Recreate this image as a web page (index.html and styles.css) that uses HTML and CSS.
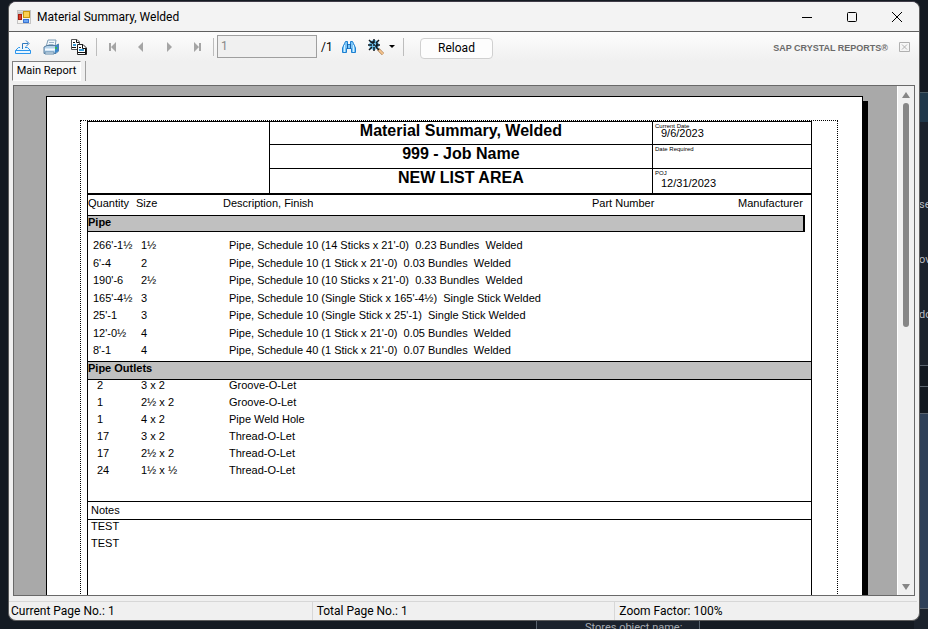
FILE: index.html
```html
<!DOCTYPE html>
<html lang="en">
<head>
<meta charset="utf-8">
<title>Material Summary, Welded</title>
<link rel="stylesheet" href="styles.css">
</head>
<body>
<div class="desktop" aria-hidden="true">
  <div class="side">
    <div class="side-head"></div>
    <div class="side-text"><span>se</span><span>ov</span><span>do</span></div>
    <div class="side-rows"></div>
    <div class="side-panel"></div>
  </div>
  <div class="under">Stores object name:</div>
</div>
<main class="window">
  <header class="titlebar">
    <svg class="app-icon" viewBox="0 0 14 14"><rect width="14" height="14" fill="#c4c4c4"/><rect x="1" y="1" width="12" height="12" fill="#f4f2ee"/><path d="M1 3H6" stroke="#c4c4c4" stroke-width="3"/><rect x="1.500" y="4.500" width="3" height="5" fill="#d8402c" stroke="#a81c10"/><rect x="6.500" y="1.500" width="6" height="6" fill="#fbd052" stroke="#c8960c"/><rect x="6.500" y="9.500" width="5" height="3" fill="#6ca8f6" stroke="#3a74d0"/></svg>
    <h1>Material Summary, Welded</h1>
    <div class="caption-buttons">
      <button aria-label="Minimize"><svg viewBox="0 0 12 12"><path d="M1 6.500H11"/></svg></button>
      <button aria-label="Maximize"><svg viewBox="0 0 12 12"><rect x="1.500" y="1.500" width="9" height="9" rx="1"/></svg></button>
      <button aria-label="Close"><svg viewBox="0 0 12 12"><path d="M1 1L11 11M11 1L1 11"/></svg></button>
    </div>
  </header>
  <div class="toolbar">
    <button class="tool" aria-label="Export"><svg viewBox="0 0 16 16" fill="none"><path d="M5 8.500H3.500L.5 11.500V14.500H15.500V11.500L12.500 8.500H10" fill="#e8f6ff" stroke="#2c95ec"/><path d="M.5 11.500H15.500" stroke="#2c95ec"/><path d="M7.500 10V4.500H13M11 1.500L14 4.500L11 7.500" stroke="#2a78c0"/></svg></button>
    <button class="tool" aria-label="Print"><svg viewBox="0 0 16 16"><path d="M5 1H13L12 8H3Z" fill="#f2f8fd" stroke="#7d9cb5"/><path d="M6 3.500H11M5.500 5.500H10.500" stroke="#9ab4c8"/><path d="M1 8L4 6.500H13L15.500 5V12L13 14.500H1Z" fill="#b4d2ea" stroke="#5a7f9f"/><path d="M2 10.500H12" stroke="#f5fbff" stroke-width="2"/><path d="M12 7L15.500 5V12L12 14.500Z" fill="#3b86c9"/><rect x="12" y="8" width="2" height="2" fill="#35b557"/><path d="M2 13H11V15H2Z" fill="#eef6fc" stroke="#6089aa"/></svg></button>
    <button class="tool" aria-label="Copy"><svg viewBox="0 0 16 16"><path d="M.5.500H6L8.500 3V10.500H.5Z" fill="#fff" stroke="#555"/><path d="M2 5H5V7H2Z" fill="#3a9ad4"/><path d="M5.500 1V3.500H8M2 3.500H4M1 8.500H5" stroke="#111" fill="none"/><path d="M6.500 5.500H12L15.500 9V15.500H6.500Z" fill="#fff" stroke="#222"/><path d="M8 10H13V12H8Z" fill="#3a9ad4"/><path d="M11.500 6V9.500H15M8 8.500H10M7 13.500H14M14.500 10V15" stroke="#111" fill="none"/></svg></button>
    <span class="sep"></span>
    <button class="nav" aria-label="First page" disabled><svg viewBox="0 0 8 10"><path d="M0 1H2V9H0ZM7 0V10L2 5Z"/></svg></button>
    <button class="nav" aria-label="Previous page" disabled><svg viewBox="0 0 8 10"><path d="M6 0V10L1 5Z"/></svg></button>
    <button class="nav" aria-label="Next page" disabled><svg viewBox="0 0 8 10"><path d="M2 0V10L7 5Z"/></svg></button>
    <button class="nav" aria-label="Last page" disabled><svg viewBox="0 0 8 10"><path d="M6 1H8V9H6ZM1 0V10L6 5Z"/></svg></button>
    <span class="sep"></span>
    <input class="page-no" type="text" value="1" aria-label="Page number" disabled>
    <span class="page-total">/1</span>
    <button class="tool find" aria-label="Find text"><svg viewBox="0 0 16 16"><path d="M3.500 4.500L4.500 2.500H6.500V5.500H9.500V2.500H11.500L12.500 4.500L14.500 9V13.500H10.500V9.500H5.500V13.500H1.500V9Z" fill="#7cc6f8" stroke="#1f80d0"/><path d="M3.500 6V13M12.500 6V13" stroke="#d2f1ff"/><path d="M6.500 5V10M9.500 5V10" stroke="#1b62a8"/></svg></button>
    <button class="tool zoom" aria-label="Zoom"><svg viewBox="0 0 16 16"><path d="M10 10L15 15" stroke="#9c6a3a" stroke-width="3"/><path d="M10 10L15 15" stroke="#f5c48e" stroke-width="2"/><circle cx="6" cy="6" r="5" fill="#6cc0ea"/><path d="M6 0V4M6 8V12M0 6H4M8 6H12M1 1L4 4M8 8L11 11M11 1L8 4M4 8L1 11M3 3H5V5M9 4V7H7" fill="none" stroke="#101820" stroke-width="1.500"/><path d="M5 6H7M6 5V7" stroke="#101820"/></svg><i class="caret"></i></button>
    <span class="sep"></span>
    <button class="reload">Reload</button>
    <strong class="brand">SAP CRYSTAL REPORTS<span>®</span></strong>
    <button class="panel-close" aria-label="Close view" disabled><svg viewBox="0 0 11 10"><path d="M.5.500H10.500V9.500H.5ZM3 2.500L8 7.500M8 2.500L3 7.500"/></svg></button>
  </div>
  <nav class="tabs"><button class="tab">Main Report</button></nav>
  <section class="viewer">
    <div class="canvas">
      <article class="page">
        <div class="margins">
          <div class="report">
            <div class="head">
              <div class="logo"></div>
              <div class="titles"><h2>Material Summary, Welded</h2><h2>999 - Job Name</h2><h2>NEW LIST AREA</h2></div>
              <dl class="dates">
                <div><dt>Current Date</dt><dd>9/6/2023</dd></div>
                <div><dt>Date Required</dt><dd></dd></div>
                <div class="last"><dt>POJ</dt><dd>12/31/2023</dd></div>
              </dl>
            </div>
            <table>
              <colgroup><col class="c-qty"><col class="c-size"><col><col class="c-part"><col class="c-man"></colgroup>
              <thead><tr><th>Quantity</th><th>Size</th><th>Description, Finish</th><th>Part Number</th><th>Manufacturer</th></tr></thead>
              <tbody class="pipe">
                <tr class="group"><th colspan="5"><div class="band short">Pipe</div></th></tr>
                <tr><td>266'-1½</td><td>1½</td><td colspan="3">Pipe, Schedule 10 (14 Sticks x 21'-0)  0.23 Bundles  Welded</td></tr>
                <tr><td>6'-4</td><td>2</td><td colspan="3">Pipe, Schedule 10 (1 Stick x 21'-0)  0.03 Bundles  Welded</td></tr>
                <tr><td>190'-6</td><td>2½</td><td colspan="3">Pipe, Schedule 10 (10 Sticks x 21'-0)  0.33 Bundles  Welded</td></tr>
                <tr><td>165'-4½</td><td>3</td><td colspan="3">Pipe, Schedule 10 (Single Stick x 165'-4½)  Single Stick Welded</td></tr>
                <tr><td>25'-1</td><td>3</td><td colspan="3">Pipe, Schedule 10 (Single Stick x 25'-1)  Single Stick Welded</td></tr>
                <tr><td>12'-0½</td><td>4</td><td colspan="3">Pipe, Schedule 10 (1 Stick x 21'-0)  0.05 Bundles  Welded</td></tr>
                <tr><td>8'-1</td><td>4</td><td colspan="3">Pipe, Schedule 40 (1 Stick x 21'-0)  0.07 Bundles  Welded</td></tr>
              </tbody>
              <tbody class="outlets">
                <tr class="group"><th colspan="5"><div class="band">Pipe Outlets</div></th></tr>
                <tr><td>2</td><td>3 x 2</td><td colspan="3">Groove-O-Let</td></tr>
                <tr><td>1</td><td>2½ x 2</td><td colspan="3">Groove-O-Let</td></tr>
                <tr><td>1</td><td>4 x 2</td><td colspan="3">Pipe Weld Hole</td></tr>
                <tr><td>17</td><td>3 x 2</td><td colspan="3">Thread-O-Let</td></tr>
                <tr><td>17</td><td>2½ x 2</td><td colspan="3">Thread-O-Let</td></tr>
                <tr><td>24</td><td>1½ x ½</td><td colspan="3">Thread-O-Let</td></tr>
              </tbody>
            </table>
            <h3>Notes</h3>
            <p>TEST</p>
            <p>TEST</p>
          </div>
        </div>
      </article>
    </div>
    <div class="scrollbar" aria-hidden="true"><i class="up"></i><i class="thumb"></i><i class="down"></i></div>
  </section>
  <footer class="status"><span>Current Page No.: 1</span><span>Total Page No.: 1</span><span>Zoom Factor: 100%</span></footer>
</main>
</body>
</html>
```
FILE: styles.css
```css
* { box-sizing: border-box; }
html, body { height: 100%; }
body { margin: 0; padding: 1px 8px 8px; background: #141a22; overflow: hidden; font: 12px/16px Roboto, "Noto Sans", sans-serif; color: #000; }
button { font: inherit; color: inherit; border: 0; padding: 0; background: none; }
svg { display: block; }

.desktop { position: absolute; inset: 0; overflow: hidden; }
.side { position: absolute; top: 92px; right: 0; bottom: 0; width: 14px; display: flex; flex-direction: column; background: #1b222c; color: #b8bcc2; font-size: 11px; }
.side-head { height: 30px; background: #20384a; border-top: 1px solid #4a5a64; }
.side-text { height: 243px; padding: 75px 0 0 5px; display: flex; flex-direction: column; gap: 39px; }
.side-rows { height: 49px; border: 1px solid #59636e; border-width: 1px 0; background: #121820; }
.side-rows::after { content: ""; display: block; margin-top: 20px; border-top: 1px solid #59636e; }
.side-panel { height: 195px; background: #2e4058; border-bottom: 1px solid #59636e; }
.under { position: absolute; left: 536px; bottom: 0; width: 164px; height: 9px; padding-left: 48px; overflow: hidden; background: #1b222c; border: 1px solid #59636e; border-width: 0 1px; color: #a8adb3; font-size: 11px; line-height: 16px; }

.window { position: relative; display: flex; flex-direction: column; height: 100%; background: #f0f0f0; border: 1px solid #5c5c5c; border-top-color: #403c48; border-radius: 8px; overflow: hidden; }
.titlebar { flex: none; display: flex; align-items: center; height: 30px; padding-left: 8px; background: #f3f3f3; border-bottom: 1px solid #606060; }
.app-icon { width: 14px; height: 14px; }
.titlebar h1 { margin: 0 0 0 6px; font-size: 12px; font-weight: 400; }
.caption-buttons { display: flex; margin-left: auto; }
.caption-buttons button { width: 45px; height: 29px; display: grid; place-items: center; }
.caption-buttons svg { width: 12px; height: 12px; fill: none; stroke: #000; }

.toolbar { flex: none; display: flex; align-items: center; height: 29px; padding: 0 9px 0 6px; background: linear-gradient(#fdfdfd, #f0f0f0); }
.tool { display: flex; align-items: center; margin-right: 12px; }
.tool svg { width: 16px; height: 16px; }
.find { margin-right: 11px; }
.zoom { margin-right: 8px; }
.sep { width: 1px; height: 18px; margin-left: -3px; background: #bdbdbd; }
.nav { width: 28px; display: grid; place-items: center; }
.sep + .nav { margin-left: 2px; }
.nav + .sep { margin-left: 2px; }
.zoom + .sep { margin-left: 0; }
.nav svg { width: 8px; height: 10px; fill: #a5a5a5; }
.page-no { width: 100px; height: 23px; margin-left: 3px; padding: 0 3px 2px; border: 1px solid #9f9f9f; background: #f0f0f0; font: inherit; color: #888; }
.page-total { width: 16px; margin: 0 4px 0 4px; }
.caret { margin-left: 5px; border: 3px solid transparent; border-top-color: #000; border-bottom: 0; }
.reload { width: 73px; height: 21px; margin: 3px 0 0 16px; border: 1px solid #d0d0d0; border-radius: 4px; background: #fdfdfd; }
.brand { margin: 3px 0 0 auto; font: bold 9px/12px "Liberation Sans", Arial, sans-serif; color: #6a6a6a; }
.panel-close { margin-left: 11px; }
.panel-close svg { width: 11px; height: 10px; fill: none; stroke: #b0b0b0; }

.tabs { flex: none; display: flex; height: 24px; padding: 0 0 4px 3px; }
.tabs::after { content: ""; margin-left: 4px; border-left: 1px solid #a0a0a0; }
.tab { width: 69px; border: 1px solid #808080; border-right-color: #fff; border-bottom-color: #fff; background: #f8f8f8; font-size: 11px; }

.viewer { flex: 1; min-height: 0; display: flex; margin: 0 4px; border: 1px solid #696969; background: #a9a9a9; }
.canvas { flex: 1; min-width: 0; overflow: hidden; padding: 10px 34px 0 32px; }
.page { height: 1056px; padding: 23px 24px 0 33px; border: 1px solid #000; background: #fff; box-shadow: 5px 5px 0 #000; }
.margins { height: 980px; padding: 0 25px 0 6px; border: 1px dotted #000; }
.report { height: 978px; border: 1px solid #000; font: 11px/13px "Liberation Sans", Arial, sans-serif; }
.head { display: grid; grid-template-columns: 25% 1fr 158px; height: 73px; border-bottom: 2px solid #000; }
.titles { display: grid; grid-template-rows: 23px 24px 24px; border: 1px solid #000; border-width: 0 1px; }
.titles h2 { margin: 0; font-size: 16px; line-height: 18px; text-align: center; border-bottom: 1px solid #000; }
.titles h2:last-child { border: 0; }
.dates { display: grid; grid-template-rows: 23px 24px 24px; margin: 0; }
.dates div { padding: 2px 0 0 2px; border-bottom: 1px solid #000; }
.dates .last { border: 0; }
.dates dt { font-size: 6px; line-height: 4px; }
.dates dd { margin: 0 0 0 6px; line-height: 11px; }
.dates .last dd { margin-top: 3px; }

table { width: 100%; border-collapse: collapse; table-layout: fixed; }
.c-qty { width: 48px; }
.c-size { width: 87px; }
.c-part { width: 146px; }
.c-man { width: 73px; }
th, td { padding: 0; text-align: left; font-weight: 400; white-space: pre; vertical-align: top; }
thead th { height: 20px; padding-top: 2px; }
td { height: 17px; padding-left: 5px; }
td:nth-child(3) { padding-left: 6px; }
.pipe tr:nth-child(even) td { height: 18px; }
.pipe tr:last-child td { height: 17px; }
.band { height: 19px; border: 1px solid #000; border-width: 1px 0; background: #c0c0c0; font-weight: 700; }
.short { height: 17px; margin: 0 6px 7px 0; border-right-width: 2px; }
.outlets td { line-height: 11px; }
.outlets td:first-child { padding-left: 9px; }
h3 { margin: 19px 0 0; height: 19px; padding: 2px 3px; border: 1px solid #000; border-width: 1px 0; font-size: 11px; line-height: 13px; font-weight: 400; }
p { margin: 0 3px 4px; }

.scrollbar { flex: none; width: 17px; display: flex; flex-direction: column; align-items: center; padding: 6px 0 5px; background: #f0f0f0; border-left: 1px solid #fff; }
.up, .down { border: 4px solid transparent; }
.up { border-top: 0; border-bottom: 6px solid #868686; }
.down { margin-top: auto; border-bottom: 0; border-top: 6px solid #868686; }
.thumb { width: 6px; height: 45%; margin-top: 5px; border-radius: 3px; background: #868686; }

.status { flex: none; display: grid; grid-template-columns: 1fr 1fr 1fr; height: 24px; margin-right: 2px; padding-top: 5px; line-height: 19px; }
.status span { padding-left: 2px; border-top: 1px solid #d7d7d7; }
.status span + span { padding-left: 4px; border-left: 1px solid #d7d7d7; }
```
